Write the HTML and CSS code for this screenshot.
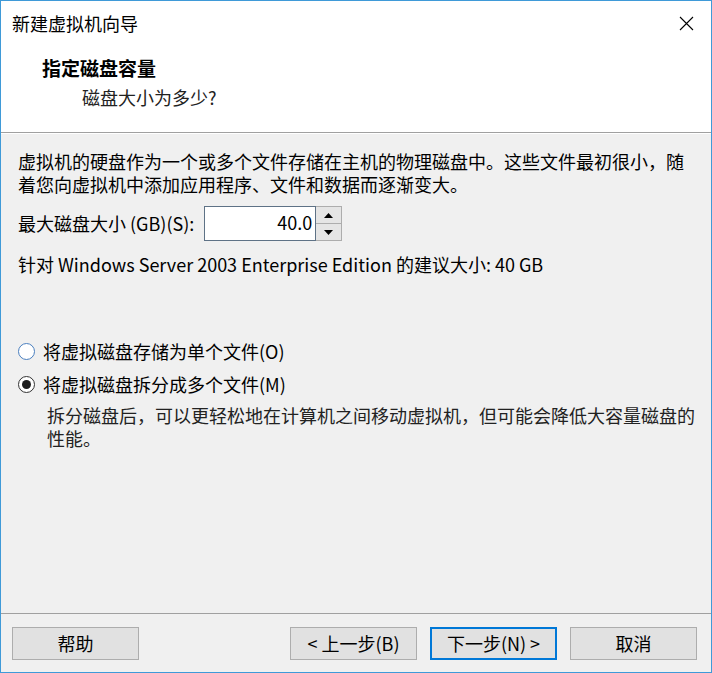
FILE: index.html
```html
<!DOCTYPE html>
<html lang="zh-CN">
<head>
<meta charset="utf-8">
<title>新建虚拟机向导</title>
<link rel="stylesheet" href="styles.css">
</head>
<body>
<div class="window">
  <div class="titlebar">
    <span class="title">新建虚拟机向导</span>
    <span class="close">
      <svg width="15" height="15" viewBox="0 0 15 15"><path d="M1 1 L14 14 M14 1 L1 14" stroke="#000" stroke-width="1.1" fill="none"/></svg>
    </span>
  </div>
  <div class="header">
    <div class="h-title">指定磁盘容量</div>
    <div class="h-sub">磁盘大小为多少?</div>
  </div>
  <div class="content">
    <p class="para">虚拟机的硬盘作为一个或多个文件存储在主机的物理磁盘中。这些文件最初很小，随着您向虚拟机中添加应用程序、文件和数据而逐渐变大。</p>
    <div class="size-row">
      <span class="label">最大磁盘大小 (GB)(S):</span>
      <div class="spin">
        <div class="spin-input">40.0</div>
        <div class="spin-btns">
          <div class="spin-btn"><svg width="9" height="5" viewBox="0 0 9 5"><path d="M0 5 L4.5 0 L9 5 Z" fill="#000"/></svg></div>
          <div class="spin-btn"><svg width="9" height="5" viewBox="0 0 9 5"><path d="M0 0 L9 0 L4.5 5 Z" fill="#000"/></svg></div>
        </div>
      </div>
    </div>
    <p class="recommend">针对 Windows Server 2003 Enterprise Edition 的建议大小: 40 GB</p>
    <div class="radios">
      <div class="radio-row">
        <span class="radio radio-off"></span>
        <span>将虚拟磁盘存储为单个文件(O)</span>
      </div>
      <div class="radio-row">
        <span class="radio radio-on"><span class="dot"></span></span>
        <span>将虚拟磁盘拆分成多个文件(M)</span>
      </div>
      <p class="desc">拆分磁盘后，可以更轻松地在计算机之间移动虚拟机，但可能会降低大容量磁盘的性能。</p>
    </div>
  </div>
  <div class="footer">
    <button class="btn">帮助</button>
    <div class="spacer"></div>
    <button class="btn">&lt; 上一步(B)</button>
    <button class="btn btn-default">下一步(N) &gt;</button>
    <button class="btn">取消</button>
  </div>
</div>
</body>
</html>
```
FILE: styles.css
```css
* { box-sizing: border-box; }
html, body { margin: 0; padding: 0; }
body {
  font-family: "Noto Sans CJK SC", "Noto Sans", sans-serif;
  font-size: 18px;
  color: #000;
  background: #fff;
}
.window {
  width: 712px;
  height: 673px;
  border: 1px solid #3f9ad8;
  display: flex;
  flex-direction: column;
  background: #f0f0f0;
}
.titlebar {
  height: 44px;
  background: #fff;
  display: flex;
  align-items: center;
  justify-content: space-between;
  padding-left: 11px;
  padding-right: 17px;
}
.title { line-height: 24px; }
.close { display: flex; margin-top: 1px; }
.header {
  height: 88px;
  background: #fff;
  padding: 11px 0 0 41px;
  border-bottom: 1px solid #a0a0a0;
}
.h-title {
  font-weight: bold;
  font-size: 19px;
  line-height: 24px;
}
.h-sub {
  margin-top: 5px;
  margin-left: 40px;
  line-height: 24px;
  color: #222;
}
.content {
  flex: 1;
  padding: 16px 12px 0 17px;
  border-top: 1px solid #fff;
}
.para {
  margin: 0;
  line-height: 23px;
}
.size-row {
  display: flex;
  align-items: center;
  margin-top: 10px;
  gap: 10px;
}
.label { line-height: 23px; }
.spin { display: flex; }
.spin-input {
  width: 112px;
  height: 35px;
  background: #fff;
  border: 1px solid #5e7286;
  text-align: right;
  padding-right: 3px;
  line-height: 31px;
}
.spin-btns {
  display: flex;
  flex-direction: column;
  width: 26px;
  height: 35px;
  border: 1px solid #adadad;
  border-left: none;
}
.spin-btn {
  flex: 1;
  background: #e5e5e5;
  display: flex;
  align-items: center;
  justify-content: center;
}
.spin-btn + .spin-btn { border-top: 1px solid #adadad; }
.recommend {
  margin: 12px 0 0 0;
  line-height: 23px;
}
.radios { margin-top: 63px; }
.radio-row {
  display: flex;
  align-items: center;
  height: 24px;
  gap: 8px;
}
.radio-row + .radio-row { margin-top: 9px; }
.radio {
  width: 17px;
  height: 17px;
  border-radius: 50%;
  background: #fff;
  display: flex;
  align-items: center;
  justify-content: center;
}
.radio-off { border: 1px solid #4a7fbf; }
.radio-on { border: 1px solid #333; }
.dot {
  width: 9px;
  height: 9px;
  border-radius: 50%;
  background: #1e1e1e;
}
.desc {
  margin: 8px 0 0 29px;
  line-height: 23px;
  color: #222;
}
.footer {
  height: 59px;
  border-top: 1px solid #a0a0a0;
  display: flex;
  align-items: flex-start;
  padding: 13px 14px 0 11px;
  gap: 13px;
}
.spacer { flex: 1; }
.btn {
  width: 127px;
  height: 33px;
  background: #e1e1e1;
  border: 1px solid #adadad;
  font-family: inherit;
  font-size: 18px;
  color: #000;
  padding: 0;
  line-height: 29px;
}
.btn-default { border: 2px solid #0078d7; }
```
